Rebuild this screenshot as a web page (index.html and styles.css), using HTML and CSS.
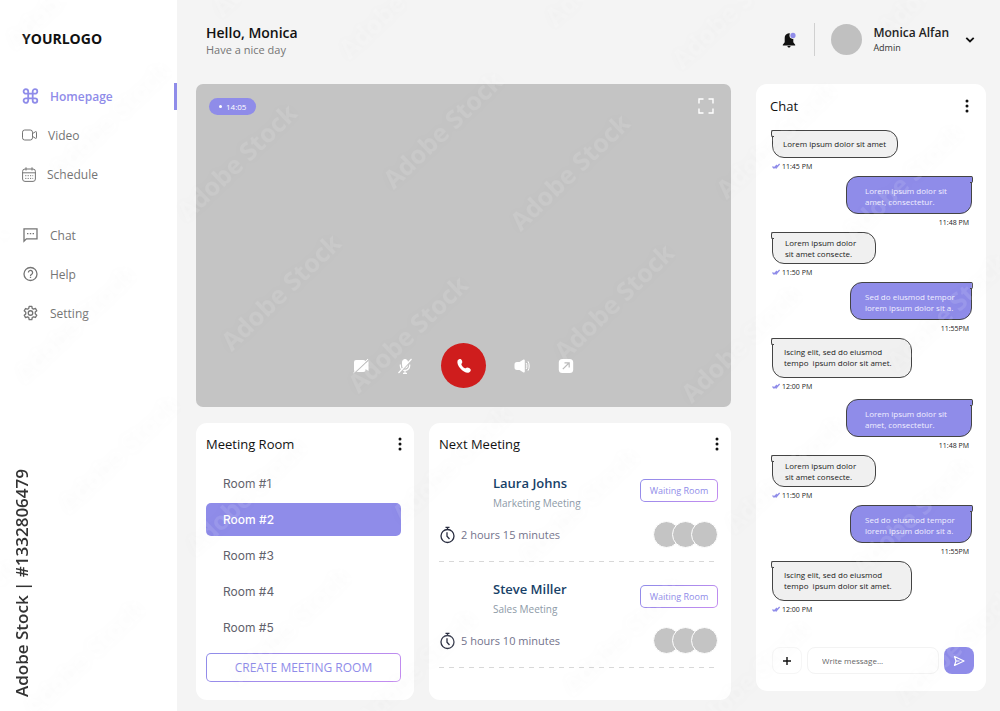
FILE: index.html
```html
<!DOCTYPE html>
<html lang="en">
<head>
    <meta charset="UTF-8">
    <meta name="viewport" content="width=device-width, initial-scale=1.0">
    <title>Meeting dashboard</title>
    <link rel="stylesheet" href="styles.css">
</head>
<body>

    <!-- Sidebar -->
    <aside class="sidebar">
        <div class="logo">YOURLOGO</div>
        <nav class="menu">
            <a href="#" class="menu-link active">
                <svg width="17" height="16" viewBox="0 0 17 16" fill="none" stroke="currentColor" stroke-width="1.8"><path d="M6.2 5.7H4A2.3 2.3 0 1 1 6.2 3.4v9.2A2.3 2.3 0 1 1 4 10.3h9a2.3 2.3 0 1 1-2.3 2.3V3.4A2.3 2.3 0 1 1 13 5.7z"/></svg>
                Homepage
            </a>
            <a href="#" class="menu-link">
                <svg width="15" height="12" viewBox="0 0 15 12" fill="none" stroke="currentColor" stroke-linejoin="round"><rect x=".5" y="1" width="10" height="10" rx="2.2"/><path d="M10.5 4.6l3-1.9c.6-.3 1 0 1 .5v5.6c0 .5-.4.8-1 .5l-3-1.9"/></svg>
                Video
            </a>
            <a href="#" class="menu-link">
                <svg width="14" height="15" viewBox="0 0 14 15" fill="none" stroke="currentColor"><rect x=".6" y="2" width="12.8" height="12.4" rx="2.4"/><path d="M.6 5.8h12.8M4 .3v3.2M10 .3v3.2"/><path d="M3.2 8.7h8M3.2 11.4h8" stroke-dasharray="1.2 1.2"/></svg>
                Schedule
            </a>
        </nav>
        <nav class="menu">
            <a href="#" class="menu-link">
                <svg width="17" height="16" viewBox="0 0 17 16" fill="none" stroke="currentColor" stroke-width="1.3"><path d="M2 14.2V1.8h13v10H4.4z"/><path d="M5 6.6h1.4M7.8 6.6h1.4M10.6 6.6H12"/></svg>
                Chat
            </a>
            <a href="#" class="menu-link">
                <svg width="17" height="16" viewBox="0 0 17 16" fill="none" stroke="currentColor" stroke-width="1.3"><circle cx="8.5" cy="8" r="6.5"/><path d="M6.4 6.5a2.1 2.1 0 1 1 3.3 1.7c-.8.5-1.2.9-1.2 1.7M8.5 10.8v1.3"/></svg>
                Help
            </a>
            <a href="#" class="menu-link">
                <svg width="17" height="16" viewBox="0 0 24 24" fill="none" stroke="currentColor" stroke-width="2" stroke-linejoin="round"><circle cx="12" cy="12" r="3.4"/><path d="M10 2h4l.6 3 1.9 1.1 2.9-1 2 3.5-2.3 2v2.6l2.3 2-2 3.5-2.9-1-1.9 1.1L14 22h-4l-.6-3-1.9-1.1-2.9 1-2-3.5 2.3-2v-2.6l-2.3-2 2-3.5 2.9 1L9.4 5z"/></svg>
                Setting
            </a>
        </nav>
    </aside>

    <main class="content">
        <header class="topbar">
            <div class="greeting">
                <h1>Hello, Monica</h1>
                <p>Have a nice day</p>
            </div>
            <button class="icon-btn bell" aria-label="Notifications">
                <svg width="16" height="16" viewBox="0 0 16 16"><path fill="#111" d="M8 1.3c2.6.2 4.3 2 4.3 4.5v4.4l1.9 2.5v.8H1.800v-.8l1.900-2.500V5.800C3.700 3.500 5.300 1.500 8 1.300zM6.400 14h3.200c-.2 1-.8 1.500-1.600 1.500S6.600 15 6.400 14z"/><circle cx="11.8" cy="3.6" r="3.3" fill="#f4f4f4"/><circle cx="12" cy="3.4" r="2.6" fill="#8f8ce9"/></svg>
            </button>
            <div class="user">
                <span class="avatar"></span>
                <div>
                    <strong>Monica Alfan</strong>
                    <small>Admin</small>
                </div>
                <button class="icon-btn" aria-label="Account menu">
                    <svg width="10" height="8" viewBox="0 0 10 8" fill="none" stroke="#111" stroke-width="1.8"><path d="M1.3 1.8L5 5.5l3.7-3.7"/></svg>
                </button>
            </div>
        </header>

        <div class="board">
            <div class="left">
                <!-- Video call -->
                <section class="video">
                    <div class="video-top">
                        <span class="timer">14:05</span>
                        <button class="icon-btn" aria-label="Full screen">
                            <svg width="16" height="16" viewBox="0 0 16 16" fill="none" stroke="#fff" stroke-width="1.4"><path d="M1 5.5V1h4.5M10.5 1H15v4.500M15 10.500V15h-4.500M5.500 15H1v-4.500"/></svg>
                        </button>
                    </div>
                    <div class="controls">
                        <button class="icon-btn" aria-label="Turn camera off">
                            <svg width="16" height="16" viewBox="0 0 16 16"><path fill="#fff" d="M3 2h7.500a2 2 0 0 1 2 2v1.300L15.500 3v10l-3-2v1a2 2 0 0 1-2 2H3a2 2 0 0 1-2-2V4a2 2 0 0 1 2-2z"/><path d="M1.300 15.300L15.800 1.700" stroke="#c4c4c4" stroke-width="1.200"/><path d="M.5 14.800L15 1" stroke="#fff"/></svg>
                        </button>
                        <button class="icon-btn" aria-label="Mute microphone">
                            <svg width="16" height="16" viewBox="0 0 16 16" fill="none" stroke="#fff"><rect x="5.500" y="1.500" width="5" height="8.500" rx="2.500" fill="#fff"/><path d="M3.300 6.500v1.200a4.700 4.700 0 0 0 9.400 0V6.500M8 12.500v3M6 15.300h4" stroke-width="1.200"/><path d="M2.300 15.500L15.300 1.500" stroke="#c4c4c4" stroke-width="1.200"/><path d="M1.500 15L14.500 1" stroke-width="1.200"/></svg>
                        </button>
                        <button class="hangup" aria-label="End call">
                            <svg width="16" height="16" viewBox="0 0 16 16"><path fill="#fff" d="M1.500 2.800C2.200 1.300 4 .6 5 1.200c.9.600 1.500 2.400 1.200 3.500-.2.700-1 1-.8 1.700.5 1.500 2 3.200 3.600 3.900.8.300 1.200-.6 2-.7 1.200-.1 3.200.8 3.700 1.900.5 1.300-.9 3-2.300 3.200C7.500 15.300.3 8 1.500 2.800z"/></svg>
                        </button>
                        <button class="icon-btn" aria-label="Volume">
                            <svg width="16" height="16" viewBox="0 0 16 16" fill="none" stroke="#fff"><path fill="#fff" stroke="none" d="M3 4h2.500l3.600-2.200c1-.6 1.700-.2 1.700.8v10.800c0 1-.7 1.400-1.700.8L5.500 12H3C1.300 12 .5 11 .5 9.500v-3C.5 5 1.300 4 3 4z"/><path d="M12.200 5c.9 1.800.9 4.200 0 6M14 3.300c1.600 2.800 1.600 6.600 0 9.400"/></svg>
                        </button>
                        <button class="icon-btn" aria-label="Share screen">
                            <svg width="16" height="16" viewBox="0 0 16 16"><rect x=".8" y="1" width="14.400" height="14" rx="3.500" fill="#fff"/><path d="M4.800 11.200L11 5M6.500 4.800h4.700v4.700" fill="none" stroke="#bbb" stroke-width="1.200"/></svg>
                        </button>
                    </div>
                </section>

                <div class="cards">
                    <!-- Rooms -->
                    <section class="card">
                        <div class="card-head">
                            <h2>Meeting Room</h2>
                            <button class="icon-btn" aria-label="Room options"><svg width="6" height="14" viewBox="0 0 6 14" fill="#111"><circle cx="3" cy="2" r="1.5"/><circle cx="3" cy="7" r="1.5"/><circle cx="3" cy="12" r="1.5"/></svg></button>
                        </div>
                        <div class="rooms">
                            <button class="room">Room #1</button>
                            <button class="room selected">Room #2</button>
                            <button class="room">Room #3</button>
                            <button class="room">Room #4</button>
                            <button class="room">Room #5</button>
                        </div>
                        <button class="outline create">CREATE MEETING ROOM</button>
                    </section>

                    <!-- Next meetings -->
                    <section class="card">
                        <div class="card-head">
                            <h2>Next Meeting</h2>
                            <button class="icon-btn" aria-label="Meeting options"><svg width="6" height="14" viewBox="0 0 6 14" fill="#111"><circle cx="3" cy="2" r="1.5"/><circle cx="3" cy="7" r="1.5"/><circle cx="3" cy="12" r="1.5"/></svg></button>
                        </div>
                        <article class="meeting">
                            <div class="meeting-top">
                                <div>
                                    <h3>Laura Johns</h3>
                                    <p>Marketing Meeting</p>
                                </div>
                                <button class="outline waiting">Waiting Room</button>
                            </div>
                            <div class="meeting-bottom">
                                <svg width="15" height="18" viewBox="0 0 15 18" fill="none" stroke="#292d40" stroke-width="1.3"><circle cx="7.5" cy="10" r="6.5"/><path d="M5.5 1.3h4M7.5 1.3v2M7 6.2v4l2.5 2.8"/></svg>
                                <span class="duration">2 hours 15 minutes</span>
                                <span class="people"><i></i><i></i><i></i></span>
                            </div>
                        </article>
                        <article class="meeting">
                            <div class="meeting-top">
                                <div>
                                    <h3>Steve Miller</h3>
                                    <p>Sales Meeting</p>
                                </div>
                                <button class="outline waiting">Waiting Room</button>
                            </div>
                            <div class="meeting-bottom">
                                <svg width="15" height="18" viewBox="0 0 15 18" fill="none" stroke="#292d40" stroke-width="1.3"><circle cx="7.5" cy="10" r="6.5"/><path d="M5.5 1.3h4M7.5 1.3v2M7 6.2v4l2.5 2.8"/></svg>
                                <span class="duration">5 hours 10 minutes</span>
                                <span class="people"><i></i><i></i><i></i></span>
                            </div>
                        </article>
                    </section>
                </div>
            </div>

            <!-- Chat -->
            <section class="chat">
                <div class="chat-head">
                    <h2>Chat</h2>
                    <button class="icon-btn" aria-label="Chat options"><svg width="6" height="14" viewBox="0 0 6 14" fill="#111"><circle cx="3" cy="2" r="1.5"/><circle cx="3" cy="7" r="1.5"/><circle cx="3" cy="12" r="1.5"/></svg></button>
                </div>
                <div class="thread">
                    <div class="group">
                        <div class="message">
                            <p class="bubble single">Lorem ipsum dolor sit amet</p>
                            <time><svg width="8" height="6" viewBox="0 0 8 6"><use href="#seen"/></svg>11:45 PM</time>
                        </div>
                        <div class="message mine">
                            <p class="bubble">Lorem ipsum dolor sit<br>amet, consectetur.</p>
                            <time>11:48 PM</time>
                        </div>
                        <div class="message">
                            <p class="bubble small">Lorem ipsum dolor<br>sit amet consecte.</p>
                            <time><svg width="8" height="6" viewBox="0 0 8 6"><use href="#seen"/></svg>11:50 PM</time>
                        </div>
                        <div class="message mine">
                            <p class="bubble tight">Sed do eiusmod tempor<br>lorem ipsum dolor sit a.</p>
                            <time>11:55PM</time>
                        </div>
                        <div class="message">
                            <p class="bubble large">Iscing elit, sed do eiusmod<br>tempo &nbsp;ipsum dolor sit amet.</p>
                            <time><svg width="8" height="6" viewBox="0 0 8 6"><use href="#seen"/></svg>12:00 PM</time>
                        </div>
                    </div>
                    <div class="group">
                        <div class="message mine">
                            <p class="bubble">Lorem ipsum dolor sit<br>amet, consectetur.</p>
                            <time>11:48 PM</time>
                        </div>
                        <div class="message">
                            <p class="bubble small">Lorem ipsum dolor<br>sit amet consecte.</p>
                            <time><svg width="8" height="6" viewBox="0 0 8 6"><use href="#seen"/></svg>11:50 PM</time>
                        </div>
                        <div class="message mine">
                            <p class="bubble tight">Sed do eiusmod tempor<br>lorem ipsum dolor sit a.</p>
                            <time>11:55PM</time>
                        </div>
                        <div class="message">
                            <p class="bubble large">Iscing elit, sed do eiusmod<br>tempo &nbsp;ipsum dolor sit amet.</p>
                            <time><svg width="8" height="6" viewBox="0 0 8 6"><use href="#seen"/></svg>12:00 PM</time>
                        </div>
                    </div>
                </div>
                <form class="composer">
                    <button type="button" class="add" aria-label="Add attachment"><svg width="10" height="10" viewBox="0 0 10 10" stroke="#111" stroke-width="1.4"><path d="M5 1v8M1 5h8"/></svg></button>
                    <input type="text" placeholder="Write message..." aria-label="Write message">
                    <button type="submit" class="send" aria-label="Send"><svg width="12" height="12" viewBox="0 0 12 12" fill="none" stroke="#fff" stroke-width="1.2" stroke-linejoin="round"><path d="M1.5 1.5L11 6l-9.5 4.5L3 6zM3 6h3.5"/></svg></button>
                </form>
            </section>
        </div>
    </main>

    <!-- Watermark over the whole page -->
    <svg class="watermark" aria-hidden="true">
        <defs>
            <path id="seen" d="M.5 3.5l1.5 1.5L5 2M3.3 4.2l.8.8L7.6 1" fill="none" stroke="#8f8ce9" stroke-width="1.3"/>
            <text id="mark" text-anchor="middle" dy="9" transform="rotate(-44)">Adobe Stock</text>
            <g id="pair">
                <use href="#mark"/>
                <use href="#mark" transform="translate(127 42)"/>
            </g>
            <g id="row">
                <use href="#pair"/>
                <use href="#pair" transform="translate(333 10)"/>
                <use href="#pair" transform="translate(666 20)"/>
                <use href="#pair" transform="translate(999 30)"/>
            </g>
        </defs>
        <use href="#row" transform="translate(-61 -52)"/>
        <use href="#row" transform="translate(110 120)"/>
        <use href="#row" transform="translate(-52 282)"/>
        <use href="#row" transform="translate(-214 444)"/>
        <use href="#row" transform="translate(-43 616)"/>
    </svg>
    <div class="stock-id">Adobe Stock | #1332806479</div>

</body>
</html>
```
FILE: styles.css
```css
* {
    box-sizing: border-box;
}

body {
    margin: 0;
    min-height: 100vh;
    display: flex;
    background-color: #f4f4f4;
    color: #111;
    font-family: "Open Sans", "Noto Sans", sans-serif;
    font-size: 12px;
}

h1, h2, h3, p {
    margin: 0;
}

button, input {
    font-family: inherit;
}

button {
    cursor: pointer;
}

svg {
    flex: none;
    display: block;
}

.icon-btn {
    display: flex;
    padding: 0;
    border: none;
    background: none;
}

/* Sidebar */
.sidebar {
    flex: 0 0 177px;
    background-color: #fff;
    display: flex;
    flex-direction: column;
}

.logo {
    height: 83px;
    padding: 29px 0 0 22px;
    font-size: 14px;
    line-height: 20px;
    font-weight: 700;
}

.menu {
    display: flex;
    flex-direction: column;
    gap: 12px;
    margin-bottom: 34px;
}

.menu-link {
    display: flex;
    align-items: center;
    gap: 11px;
    height: 27px;
    padding: 0 0 1px 22px;
    border-right: 3px solid transparent;
    color: #757575;
    font-size: 12px;
    text-decoration: none;
}

.menu-link.active {
    border-color: #8f8ce9;
    color: #8f8ce9;
    font-weight: 600;
}

/* Top bar */
.content {
    flex: 1;
    min-width: 0;
    display: flex;
    flex-direction: column;
    padding: 0 14px 11px 19px;
}

.topbar {
    display: flex;
    align-items: center;
    height: 84px;
    padding: 0 11px 5px 10px;
}

.greeting {
    flex: 1;
    padding-top: 2px;
}

.greeting h1 {
    font-size: 14px;
    line-height: 19px;
    font-weight: 600;
}

.greeting p {
    color: #757575;
    font-size: 11px;
    line-height: 16px;
}

.bell {
    margin-right: 17px;
}

.user {
    display: flex;
    align-items: center;
    height: 33px;
    padding-left: 16px;
    border-left: 1px solid #d0d0d0;
}

.avatar {
    width: 31px;
    height: 31px;
    margin-right: 11px;
    border-radius: 50%;
    background-color: #c0c0c0;
}

.user strong {
    display: block;
    margin-right: 16px;
    color: #222;
    font-size: 12px;
    line-height: 16px;
    font-weight: 600;
}

.user small {
    display: block;
    color: #333;
    font-size: 9px;
    line-height: 13px;
}

.board {
    flex: 1;
    display: grid;
    grid-template-columns: 1fr 230px;
    gap: 25px;
}

.left {
    display: flex;
    flex-direction: column;
    gap: 16px;
}

/* Video call */
.video {
    min-height: 323px;
    display: flex;
    flex-direction: column;
    justify-content: space-between;
    padding: 14px 13px 19px;
    border-radius: 7px;
    background-color: #c4c4c4;
}

.video-top {
    display: flex;
    justify-content: space-between;
    padding-right: 4px;
}

.timer {
    display: flex;
    align-items: center;
    gap: 4px;
    height: 17px;
    padding: 0 10px;
    border-radius: 9px;
    background-color: #8f8ce9;
    color: #fff;
    font-size: 8px;
}

.timer::before {
    content: "";
    width: 3px;
    height: 3px;
    border-radius: 50%;
    background-color: #fff;
}

.controls {
    display: flex;
    justify-content: center;
    align-items: center;
    gap: 28px;
}

.hangup {
    display: flex;
    align-items: center;
    justify-content: center;
    width: 45px;
    height: 45px;
    border: none;
    border-radius: 50%;
    background-color: #cf1d1d;
}

/* Cards */
.cards {
    flex: 1;
    display: grid;
    grid-template-columns: 218fr 302fr;
    gap: 15px;
}

.card {
    padding: 9px 13px 18px 10px;
    border-radius: 11px;
    background-color: #fff;
}

.card-head {
    display: flex;
    align-items: center;
    justify-content: space-between;
    height: 24px;
}

.card-head .icon-btn {
    margin-right: -2px;
}

.card-head h2 {
    font-size: 13px;
    font-weight: 400;
}

.rooms {
    display: flex;
    flex-direction: column;
    gap: 3px;
    margin: 11px 0 9px;
}

.room {
    height: 33px;
    padding: 0 17px 1px;
    border: none;
    border-radius: 5px;
    background: none;
    color: #62626c;
    font-family: Inter, sans-serif;
    font-size: 12px;
    text-align: left;
}

.room.selected {
    background-color: #8f8ce9;
    color: #fff;
    font-weight: 500;
}

.outline {
    border: 1px solid transparent;
    border-radius: 5px;
    background: linear-gradient(#fff, #fff) padding-box, linear-gradient(135deg, #8f8ce9, #c58cf0) border-box;
    color: #8f8ce9;
}

.create {
    width: 100%;
    height: 29px;
    font-size: 12px;
    font-weight: 500;
}

.meeting {
    margin-top: 18px;
    padding-bottom: 14px;
    background: repeating-linear-gradient(90deg, #d8d8d8 0 5px, transparent 5px 10px) bottom / 100% 1px no-repeat;
}

.meeting-top {
    display: flex;
    justify-content: space-between;
    padding-left: 54px;
}

.meeting h3 {
    color: #174168;
    font-size: 13px;
    line-height: 18px;
    font-weight: 600;
}

.meeting p {
    margin-top: 3px;
    color: #8d9aa7;
    font-size: 10px;
    line-height: 16px;
}

.waiting {
    width: 78px;
    height: 23px;
    margin-top: 5px;
    padding: 0;
    font-size: 9px;
    white-space: nowrap;
}

.meeting-bottom {
    display: flex;
    align-items: center;
    gap: 6px;
    margin-top: 10px;
    padding-left: 1px;
}

.duration {
    flex: 1;
    color: #73738c;
    font-size: 11px;
}

.people {
    display: flex;
}

.people i {
    width: 27px;
    height: 27px;
    margin-left: -8px;
    border: 1px solid #fff;
    border-radius: 50%;
    background-color: #c4c4c4;
}

/* Chat */
.chat {
    display: flex;
    flex-direction: column;
    margin-bottom: 9px;
    padding: 10px 12px 17px 16px;
    border-radius: 11px;
    background-color: #fff;
}

.chat-head {
    display: flex;
    align-items: center;
    justify-content: space-between;
    height: 24px;
    padding-right: 4px;
}

.chat-head h2 {
    margin-left: -2px;
    font-size: 13px;
    font-weight: 500;
}

.thread {
    display: flex;
    flex-direction: column;
    gap: 3px;
    margin-top: 12px;
}

.message {
    display: flex;
    flex-direction: column;
    align-items: flex-start;
}

.message.mine {
    align-items: flex-end;
    padding-right: 2px;
}

.bubble {
    position: relative;
    width: 126px;
    height: 38px;
    padding: 8px 0 0 18px;
    border: 1px solid #444;
    border-radius: 0 12px 12px 12px;
    background-color: #f0f0f0;
    color: #222;
    font-size: 8px;
    line-height: 11px;
    white-space: nowrap;
}

/* little hook in the top corner */
.bubble::before {
    content: "";
    position: absolute;
    top: -1px;
    left: -2px;
    width: 2px;
    height: 5px;
    border: 1px solid #444;
    border-right: none;
    border-radius: 2px 0 0 2px;
    background-color: inherit;
}

.mine .bubble {
    border-radius: 12px 0 12px 12px;
    background-color: #8f8ce9;
    color: #f0efff;
}

.mine .bubble::before {
    left: auto;
    right: -2px;
    border-right: 1px solid #444;
    border-left: none;
    border-radius: 0 2px 2px 0;
}

.bubble.single {
    height: 28px;
    padding: 7px 0 0 10px;
}

.bubble.small {
    width: 104px;
    height: 32px;
    padding: 4px 0 0 12px;
}

.mine .bubble.tight {
    width: 122px;
    padding-left: 14px;
}

.bubble.large {
    width: 140px;
    height: 40px;
    padding: 7px 0 0 11px;
}

time {
    display: flex;
    align-items: center;
    gap: 2px;
    height: 18px;
    padding-bottom: 2px;
    color: #222;
    font-size: 7px;
}

.mine time {
    margin-right: 3px;
}

.composer {
    display: flex;
    gap: 5px;
    margin-top: auto;
}

.composer button {
    display: flex;
    align-items: center;
    justify-content: center;
    width: 30px;
    height: 27px;
    padding: 0;
    border: 1px solid #f6f6f6;
    border-radius: 8px;
    background-color: #fff;
}

.composer input {
    flex: 1;
    min-width: 0;
    height: 27px;
    padding: 0 14px;
    border: 1px solid #f3f3f3;
    border-radius: 8px;
    font-size: 8px;
}

.composer input::placeholder {
    color: #666;
}

.composer .send {
    border: none;
    background-color: #8f8ce9;
}

/* Watermark */
.watermark {
    position: fixed;
    top: 0;
    left: 0;
    width: 100%;
    height: 100%;
    pointer-events: none;
    fill: rgba(255, 255, 255, 0.1);
    font-size: 25px;
    font-weight: 700;
    filter: drop-shadow(0 0 4px rgba(0, 0, 0, 0.2));
}

.stock-id {
    position: fixed;
    left: 10px;
    bottom: 14px;
    color: #333;
    font-size: 17px;
    line-height: 24px;
    font-weight: 600;
    writing-mode: vertical-rl;
    transform: rotate(180deg);
}
```
